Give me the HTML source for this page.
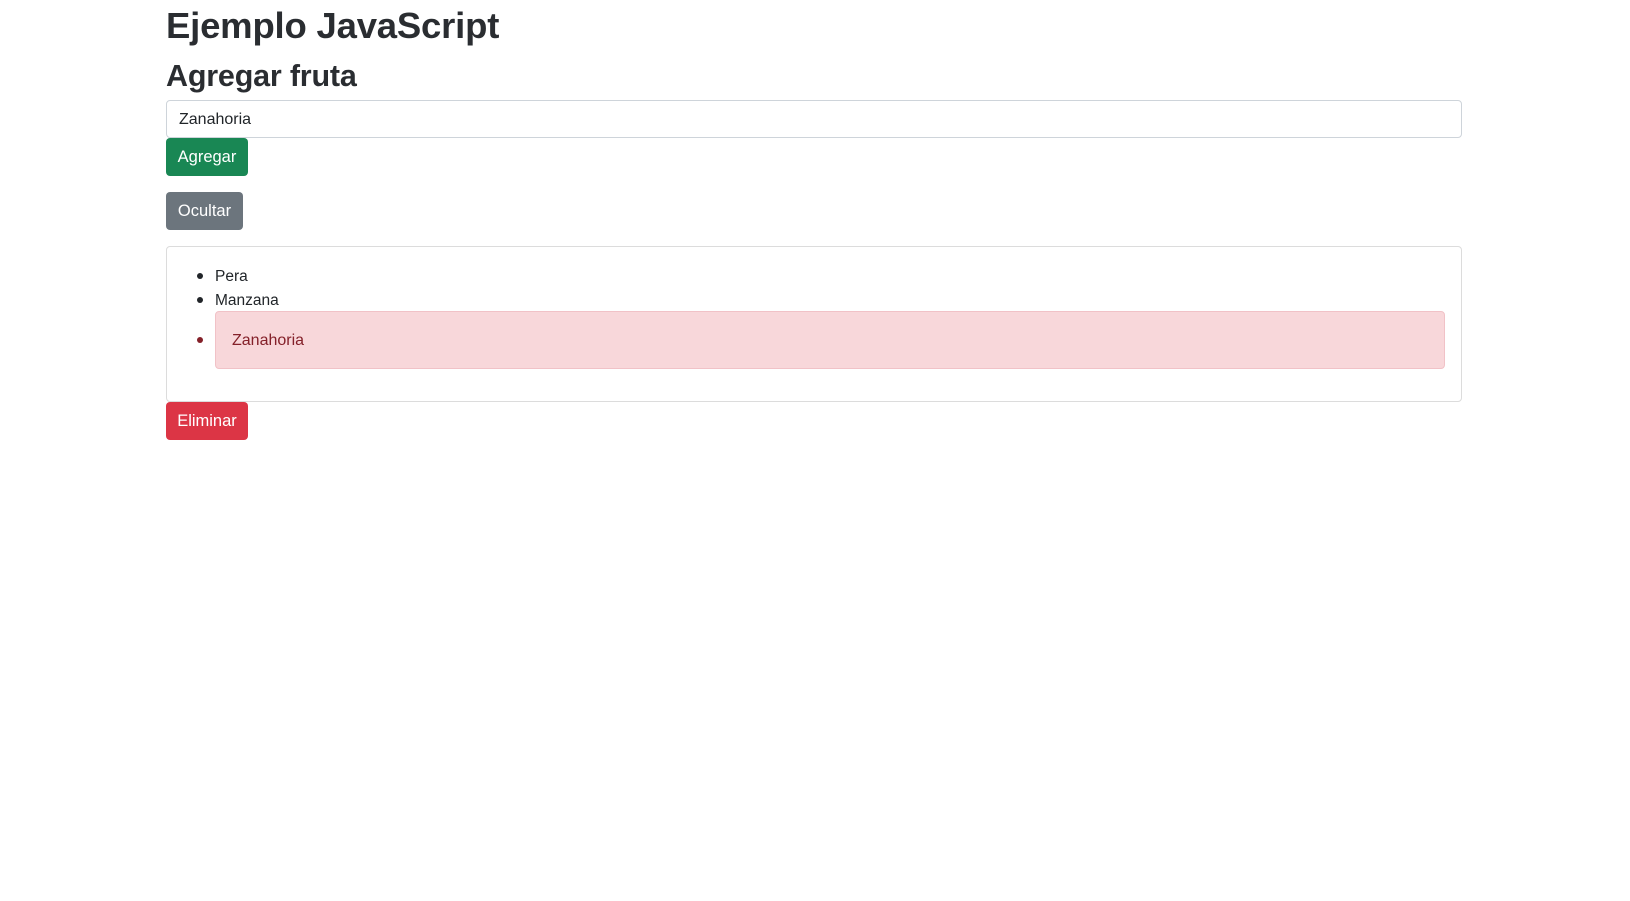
<!DOCTYPE html>
<html><head><meta charset="utf-8"><style>
body{margin:0;background:#fff;font-family:"Liberation Sans",sans-serif;color:#212529;width:1630px;height:901px;position:relative;overflow:hidden}
.a{position:absolute}
h1,h2{margin:0;font-weight:bold;position:absolute;left:166px;white-space:nowrap;color:#2a2d31}
h1{font-size:36.5px;top:5px;letter-spacing:-0.2px}
h2{font-size:30.5px;top:59px;letter-spacing:-0.2px}
.inp{left:166px;top:100px;width:1294px;height:36px;border:1px solid #ced4da;border-radius:4px;font-size:16px;line-height:37px;text-indent:12px}
.btn{color:#fff;font-size:16.5px;border-radius:4px;text-align:center;line-height:39px;height:38px;left:166px}
.card{left:166px;top:246px;width:1294px;height:154px;border:1px solid #dcdcdc;border-radius:4px}
.li{font-size:15.5px;left:215px}
.dot{width:6px;height:6px;border-radius:50%;background:#212529;left:197px}
.alert{left:215px;top:311px;width:1228px;height:56px;background:#f8d7da;border:1px solid #f1c2c7;border-radius:4px;color:#842029;font-size:16px;line-height:57px;text-indent:16px}
</style></head><body>
<h1>Ejemplo JavaScript</h1>
<h2>Agregar fruta</h2>
<div class="a inp">Zanahoria</div>
<div class="a btn" style="top:138px;width:82px;background:#198754">Agregar</div>
<div class="a btn" style="top:192px;width:77px;background:#6c757d">Ocultar</div>
<div class="a card"></div>
<div class="a dot" style="top:273px"></div><div class="a li" style="top:268px">Pera</div>
<div class="a dot" style="top:297px"></div><div class="a li" style="top:292px">Manzana</div>
<div class="a dot" style="top:337px;background:#842029"></div>
<div class="a alert">Zanahoria</div>
<div class="a btn" style="top:402px;width:82px;background:#dc3545">Eliminar</div>
</body></html>
